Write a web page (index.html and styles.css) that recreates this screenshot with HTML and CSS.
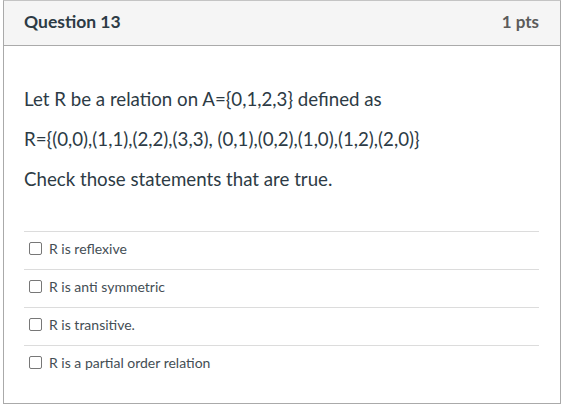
FILE: index.html
```html
<!DOCTYPE html>
<html>
<head>
<meta charset="utf-8">
<link rel="stylesheet" href="styles.css">
</head>
<body>
<div class="card">
  <div class="header">
    <div class="title">Question 13</div>
    <div class="pts">1 pts</div>
  </div>
  <div class="body">
    <p class="line">Let R be a relation on A={0,1,2,3} defined as</p>
    <p class="line">R={(0,0),(1,1),(2,2),(3,3), (0,1),(0,2),(1,0),(1,2),(2,0)}</p>
    <p class="line">Check those statements that are true.</p>
    <div class="answers">
      <label class="answer"><span class="box"></span><span>R is reflexive</span></label>
      <label class="answer"><span class="box"></span><span>R is anti symmetric</span></label>
      <label class="answer"><span class="box"></span><span>R is transitive.</span></label>
      <label class="answer"><span class="box"></span><span>R is a partial order relation</span></label>
    </div>
  </div>
</div>
</body>
</html>
```
FILE: styles.css
```css
html, body {
  margin: 0;
  padding: 0;
  background: #fff;
}
body {
  font-family: Lato, "Noto Sans", sans-serif;
  color: #2d3b45;
}
.card {
  margin-left: 3px;
  width: 556px;
  height: 402px;
  border: 1px solid #aaaaaa;
  border-top: 1px solid #c4c4c4;
  box-sizing: content-box;
}
.header {
  height: 41px;
  background: #f5f5f5;
  border-bottom: 1px solid #aaaaaa;
  display: flex;
  align-items: center;
  justify-content: space-between;
  padding: 0 21px 3px 20px;
}
.title {
  font-size: 17.5px;
  font-weight: 700;
  color: #2d3b45;
}
.pts {
  font-size: 17px;
  font-weight: 700;
  color: #5b5b5b;
}
.body {
  padding: 33px 21px 0 20px;
}
.line {
  margin: 0;
  font-size: 18.7px;
  line-height: 40px;
}
.answers {
  margin-top: 32px;
}
.answer {
  display: flex;
  align-items: center;
  height: 33px;
  padding-bottom: 4px;
  border-top: 1px solid #dcdcdc;
  font-size: 14px;
  color: #444e55;
}
.box {
  width: 11px;
  height: 11px;
  border: 1px solid #777;
  border-radius: 2px;
  margin: 0 7px 0 5px;
  background: #fff;
}
```
